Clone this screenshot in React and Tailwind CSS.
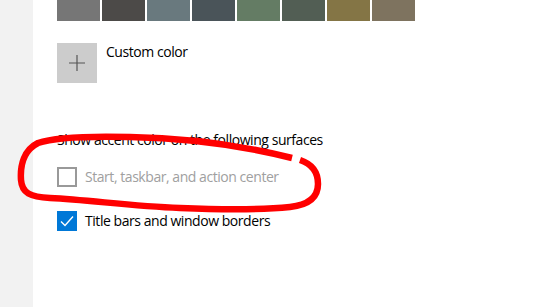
import React from "react";

const swatches = ["#767676", "#4c4a48", "#69797e", "#4a5459", "#647c64", "#525e54", "#847545", "#7e735f"];

export default function App() {
  return (
    <div className="relative flex w-[533px] h-[307px] overflow-hidden bg-white text-black" style={{ fontFamily: '"Open Sans", "Noto Sans", sans-serif' }}>
      <div className="w-[33px] shrink-0 bg-[#f2f2f2]" />
      <div className="flex flex-col pl-[24px]">
        <div className="flex gap-[2px]">
          {swatches.map((c) => (
            <div key={c} className="w-[43px] h-[21px]" style={{ backgroundColor: c }} />
          ))}
        </div>
        <div className="mt-[22px] flex items-start">
          <div className="w-[40px] h-[40px] bg-[#cccccc] flex items-center justify-center">
            <svg width="18" height="18" viewBox="0 0 18 18">
              <path d="M9 1V17M1 9H17" stroke="#555" strokeWidth="1.2" />
            </svg>
          </div>
          <span className="ml-[9px] -mt-[1px] text-[14px] leading-[20px] tracking-[-0.45px]">Custom color</span>
        </div>
        <div className="mt-[47px] text-[14px] leading-[20px] tracking-[-0.45px]">Show accent color on the following surfaces</div>
        <div className="mt-[17px] flex items-center">
          <div className="w-[20px] h-[20px] border-2 border-[#999999]" />
          <span className="ml-[8px] text-[14px] leading-[20px] tracking-[-0.45px] text-[#a0a0a0]">Start, taskbar, and action center</span>
        </div>
        <div className="mt-[24px] flex items-center">
          <div className="w-[20px] h-[20px] bg-[#0078d7] flex items-center justify-center">
            <svg width="20" height="20" viewBox="0 0 20 20">
              <path d="M4 10.5L8 14.5L16 5.5" fill="none" stroke="white" strokeWidth="1.4" />
            </svg>
          </div>
          <span className="ml-[8px] text-[14px] leading-[20px] tracking-[-0.45px]">Title bars and window borders</span>
        </div>
      </div>
      <svg className="absolute inset-0 pointer-events-none" width="533" height="307" viewBox="0 0 533 307">
        <path
          d="M300 160 C312 164, 318 172, 318 184 C318 198, 308 205, 290 207 C260 210, 230 210, 180 208 C130 206, 90 200, 50 198 C30 197, 22 193, 21 180 C20 165, 24 150, 38 143 C55 137, 90 136, 130 137 C190 138, 240 145, 292 158"
          fill="none"
          stroke="#ff0000"
          strokeWidth="6.5"
          strokeLinecap="butt"
        />
      </svg>
    </div>
  );
}
